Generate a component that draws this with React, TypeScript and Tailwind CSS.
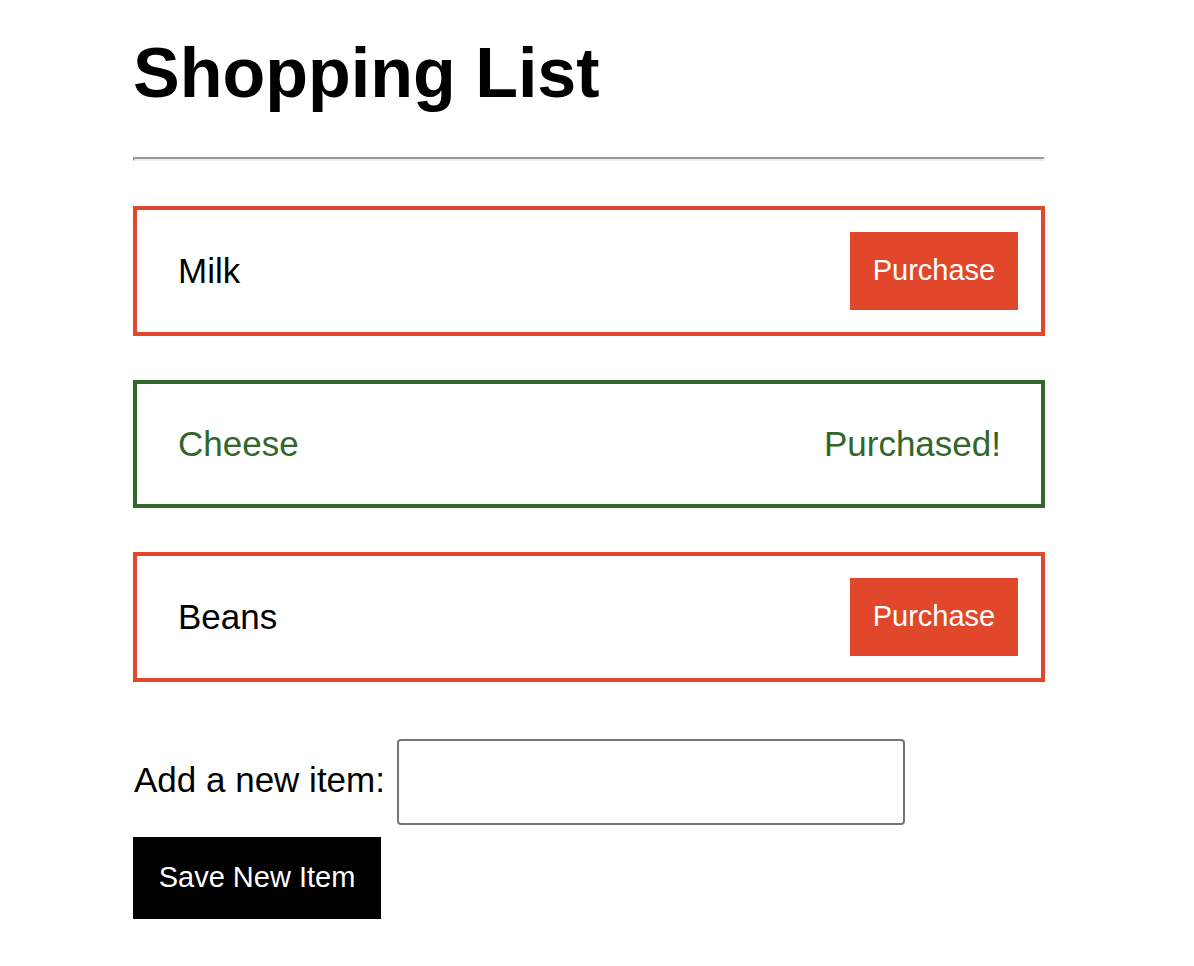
import { useState } from "react";

type Item = {
    name: string
    purchased: boolean
}

const initialItems: Item[] = [
    { name: "Milk", purchased: false },
    { name: "Cheese", purchased: true },
    { name: "Beans", purchased: false },
]

const ListItem = ({ item, onPurchase }: { item: Item, onPurchase: () => void }) => {
    if (item.purchased) {
        return (
            <li className="flex items-center justify-between border-4 border-[#33662a] pl-[41px] pr-[40px] py-[22px] text-[#33662a]">
                <span className="leading-[76px]">{item.name}</span>
                <span className="leading-[76px]">Purchased!</span>
            </li>
        )
    }
    return (
        <li className="flex items-center justify-between border-4 border-[#e1472b] pl-[41px] pr-[23px] py-[22px]">
            <span>{item.name}</span>
            <button
                onClick={onPurchase}
                className="w-[168px] h-[78px] bg-[#e1472b] text-white text-[29px]"
            >
                Purchase
            </button>
        </li>
    )
}

const App = () => {
    const [items, setItems] = useState<Item[]>(initialItems)
    const [newItem, setNewItem] = useState("")

    const purchase = (index: number) => {
        setItems(items.map((it, i) => (i === index ? { ...it, purchased: true } : it)))
    }

    const save = () => {
        if (!newItem.trim()) return
        setItems([...items, { name: newItem.trim(), purchased: false }])
        setNewItem("")
    }

    return (
        <div className="min-h-screen bg-white text-black font-['Liberation_Sans',Arial,sans-serif] text-[35px]">
            <div className="ml-[133px] w-[912px] pt-[33px] pb-[40px]">
                <h1 className="text-[70px] font-bold leading-[80px]">Shopping List</h1>
                <div className="mt-[44px] h-[4px] border-2 border-t-[#9a9a9a] border-l-[#9a9a9a] border-b-[#eeeeee] border-r-[#eeeeee]" />

                <ul className="mt-[45px] flex flex-col gap-[44px]">
                    {items.map((item, i) => (
                        <ListItem key={item.name + i} item={item} onPurchase={() => purchase(i)} />
                    ))}
                </ul>

                <div className="mt-[57px] flex items-center gap-[12px]">
                    <label htmlFor="new-item" className="mb-[4px] ml-[1px]">Add a new item:</label>
                    <input
                        id="new-item"
                        value={newItem}
                        onChange={(e) => setNewItem(e.target.value)}
                        className="w-[508px] h-[86px] border-2 border-[#767676] rounded-[4px] px-2 outline-none"
                    />
                </div>
                <button onClick={save} className="mt-[12px] w-[248px] h-[82px] bg-black text-white text-[29px]">
                    Save New Item
                </button>
            </div>
        </div>
    );
}

export default App;
